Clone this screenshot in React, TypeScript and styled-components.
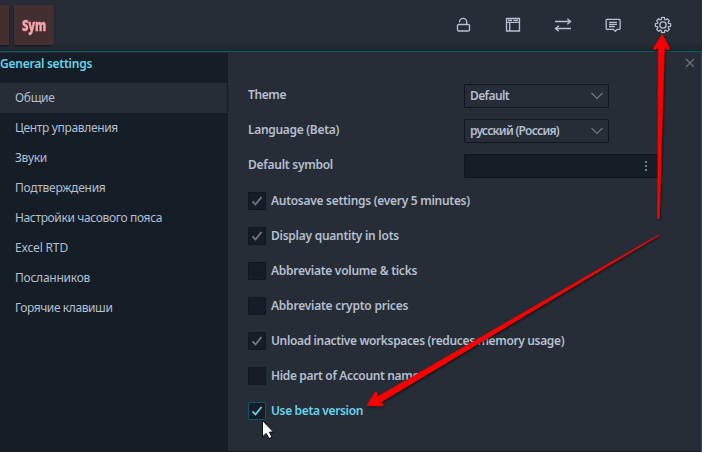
import React from "react";
import styled, { createGlobalStyle } from "styled-components";

const GlobalStyle = createGlobalStyle`
  * { box-sizing: border-box; }
  body {
    margin: 0;
    overflow: hidden;
    background: #262d36;
    color: #b4bfcf;
    font: 400 12px/18px "Noto Sans", "Open Sans", sans-serif;
  }
`;

const Screen = styled.div`
  position: relative;
  display: flex;
  flex-direction: column;
  width: 702px;
  height: 452px;
  overflow: hidden;
  background: #262d36;
`;

const TopBar = styled.header`
  display: flex;
  justify-content: space-between;
  flex: none;
  height: 51px;
  padding: 5px 29px 6px 0;
  background: linear-gradient(#262d36 42px, #20262d 51px);
`;

const Symbols = styled.div`
  display: flex;
  gap: 5px;
`;

const SymbolTile = styled.div<{ $width: number }>`
  display: flex;
  align-items: center;
  justify-content: center;
  width: ${(p) => p.$width}px;
  height: 40px;
  background: #442f30;
  box-shadow: 0 1px 2px rgba(0, 0, 0, 0.5);
`;

const SymbolText = styled.span`
  color: #f5a4a8;
  font: 800 16px/20px "Open Sans", sans-serif;
  letter-spacing: -0.3px;
  -webkit-text-stroke: 0.3px currentColor;
  transform: scaleX(0.7);
`;

const Tools = styled.nav`
  display: flex;
  align-items: center;
  gap: 30px;
`;

const ToolIcon = styled.svg`
  display: block;
  width: 20px;
  height: 20px;
  fill: none;
  stroke: #b6c0d0;
  stroke-width: 1.3;
`;

const Panel = styled.main`
  display: flex;
  flex: 1;
  border: solid #0c5668;
  border-width: 1px 1px 0 0;
  box-shadow: inset 0 -1px 0 #1b1c24;
`;

const Sidebar = styled.aside`
  width: 228px;
  margin: 1px 0;
  background: #151e27;
`;

const Label = styled.span<{ $track: number }>`
  letter-spacing: ${(p) => p.$track}px;
  white-space: nowrap;
`;

const SidebarTitle = styled.h1`
  display: flex;
  align-items: center;
  height: 30px;
  margin: 0;
  padding-bottom: 9px;
  color: #69d3ec;
  font: inherit;
  font-weight: 600;
`;

const MenuItem = styled.div<{ $active?: boolean }>`
  display: flex;
  align-items: center;
  width: 227px;
  height: 30px;
  padding-left: 15px;
  background: ${(p) => (p.$active ? "#262d36" : "transparent")};
`;

const Content = styled.section`
  flex: 1;
  padding: 4px 4px 0 20px;
  font-weight: 600;
`;

const CloseRow = styled.div`
  display: flex;
  justify-content: flex-end;
  height: 28px;
`;

const CloseIcon = styled.svg`
  width: 14px;
  height: 14px;
  stroke: #6c747e;
  stroke-width: 1.1;
`;

const FieldRow = styled.div`
  display: grid;
  grid-template-columns: 216px 1fr;
  align-items: start;
  height: 35px;
  line-height: 22px;
`;

const Select = styled.div`
  display: flex;
  align-items: center;
  justify-content: space-between;
  width: 145px;
  height: 24px;
  padding: 0 5px;
  border: 1px solid #11171e;
  border-radius: 1px;
`;

const Chevron = styled.svg`
  width: 12px;
  height: 8px;
  fill: none;
  stroke: #6c7681;
  stroke-width: 1.2;
`;

const SymbolInput = styled.div`
  display: flex;
  align-items: center;
  justify-content: flex-end;
  width: 195px;
  height: 24px;
  padding-right: 11px;
  border: 1px solid #10171d;
  border-radius: 1px;
  background: #151e27;
`;

const Dots = styled.svg`
  width: 2px;
  height: 10px;
  fill: #747c86;
`;

const CheckRow = styled.div<{ $hover?: boolean }>`
  display: flex;
  align-items: center;
  gap: 5px;
  height: 18px;
  margin-bottom: 17px;
  color: ${(p) => (p.$hover ? "#69d3ec" : "inherit")};
`;

const CheckList = styled.div`
  padding-top: 3px;
`;

const CheckBox = styled.div<{ $hover?: boolean }>`
  display: flex;
  align-items: center;
  justify-content: center;
  width: 18px;
  height: 18px;
  border: 1px solid ${(p) => (p.$hover ? "#0c5668" : "#10171d")};
  border-radius: 1px;
  background: #151e27;
  color: ${(p) => (p.$hover ? "#69d3ec" : "#737c86")};
`;

const CheckMark = styled.svg`
  width: 12px;
  height: 12px;
  fill: none;
  stroke: currentColor;
  stroke-width: 1.8;
`;

const Annotations = styled.svg`
  position: absolute;
  inset: 0;
  width: 702px;
  height: 452px;
  pointer-events: none;
`;

const menu = [
  { text: "Общие", track: -0.32 },
  { text: "Центр управления", track: -0.34 },
  { text: "Звуки", track: -0.3 },
  { text: "Подтверждения", track: -0.24 },
  { text: "Настройки часового пояса", track: -0.36 },
  { text: "Excel RTD", track: -0.16 },
  { text: "Посланников", track: -0.25 },
  { text: "Горячие клавиши", track: -0.41 },
];

const options = [
  { text: "Autosave settings (every 5 minutes)", track: -0.29, checked: true },
  { text: "Display quantity in lots", track: -0.26, checked: true },
  { text: "Abbreviate volume & ticks", track: -0.27, checked: false },
  { text: "Abbreviate crypto prices", track: -0.23, checked: false },
  { text: "Unload inactive workspaces (reduces memory usage)", track: -0.36, checked: true },
  { text: "Hide part of Account name", track: -0.35, checked: false },
  { text: "Use beta version", track: -0.36, checked: true, hover: true },
];

// Eight-toothed outline built around the centre of a 20px box.
const gearPath =
  Array.from({ length: 8 }, (_, i) => {
    const at = (r: number, deg: number) => {
      const a = ((i * 45 + deg) * Math.PI) / 180;
      return `${(10 + r * Math.sin(a)).toFixed(2)} ${(10 - r * Math.cos(a)).toFixed(2)}`;
    };
    return `${i ? "L" : "M"}${at(5.9, -16)}L${at(7.6, -11)}Q${at(7.9, 0)} ${at(7.6, 11)}L${at(5.9, 16)}Q${at(5.5, 22.5)} ${at(5.9, 29)}`;
  }).join("") + "Z";

function DropDown({ text, track }: { text: string; track: number }) {
  return (
    <Select>
      <Label $track={track}>{text}</Label>
      <Chevron viewBox="0 0 12 8"><path d="M.5 1 6 6.5 11.5 1" /></Chevron>
    </Select>
  );
}

export default function App() {
  return (
    <Screen>
      <GlobalStyle />
      <TopBar>
        <Symbols>
          <SymbolTile $width={9} />
          <SymbolTile $width={40}><SymbolText>Sym</SymbolText></SymbolTile>
        </Symbols>
        <Tools>
          <ToolIcon viewBox="0 0 20 20">
            <rect x="4.5" y="9.5" width="12" height="6.5" rx="1" />
            <path d="M6.5 7.2V6.9a3.6 3.6 0 0 1 7.2 0v2.6" />
          </ToolIcon>
          <ToolIcon viewBox="0 0 20 20">
            <path d="M3.5 3.5h13v12.5h-13zM3.5 7.3h13M6.7 7.3V16M5 5.4h4M10.5 5.4h4.5" />
          </ToolIcon>
          <ToolIcon viewBox="0 0 20 20">
            <path d="M2 6.5h16M14.3 3.7l3.4 2.8-3.4 2.8M18 13.5H2.3M5.8 10.7l-3.4 2.8 3.4 2.8" />
          </ToolIcon>
          <ToolIcon viewBox="0 0 20 20">
            <path d="M4 4.4h12.3a.8.8 0 0 1 .8.8v8.4a.8.8 0 0 1-.8.8h-2.2L12.3 16.4 10.4 14.4H4a.8.8 0 0 1-.8-.8V5.2a.8.8 0 0 1 .8-.8zM6 7.3h8M6 9.4h8M6 11.5h6" />
          </ToolIcon>
          <ToolIcon viewBox="0 0 20 20">
            <path d={gearPath} />
            <circle cx="10" cy="10" r="3.1" />
          </ToolIcon>
        </Tools>
      </TopBar>
      <Panel>
        <Sidebar>
          <SidebarTitle><Label $track={-0.25}>General settings</Label></SidebarTitle>
          {menu.map((item, i) => (
            <MenuItem key={item.text} $active={i === 0}>
              <Label $track={item.track}>{item.text}</Label>
            </MenuItem>
          ))}
        </Sidebar>
        <Content>
          <CloseRow>
            <CloseIcon viewBox="0 0 14 14"><path d="m3 3 8 8m0-8-8 8" /></CloseIcon>
          </CloseRow>
          <FieldRow>
            <Label $track={-0.41}>Theme</Label>
            <DropDown text="Default" track={-0.6} />
          </FieldRow>
          <FieldRow>
            <Label $track={-0.31}>Language (Beta)</Label>
            <DropDown text="русский (Россия)" track={-0.74} />
          </FieldRow>
          <FieldRow>
            <Label $track={-0.26}>Default symbol</Label>
            <SymbolInput>
              <Dots viewBox="0 0 2 10"><path d="M0 0h2v2H0zM0 4h2v2H0zM0 8h2v2H0z" /></Dots>
            </SymbolInput>
          </FieldRow>
          <CheckList>
            {options.map((o) => (
              <CheckRow key={o.text} $hover={o.hover}>
                <CheckBox $hover={o.hover}>
                  {o.checked && <CheckMark viewBox="0 0 12 12"><path d="m1.5 6.3 3 3.2L10.5 2" /></CheckMark>}
                </CheckBox>
                <Label $track={o.track}>{o.text}</Label>
              </CheckRow>
            ))}
          </CheckList>
        </Content>
      </Panel>
      <Annotations viewBox="0 0 702 452">
        <defs>
          <filter id="arrow-shadow" x="-10%" y="-10%" width="120%" height="120%">
            <feDropShadow dx="0.8" dy="1.2" stdDeviation="0.8" floodColor="#000" floodOpacity="0.65" />
          </filter>
        </defs>
        <g fill="#fb0200" stroke="#fb0200" strokeLinejoin="round" filter="url(#arrow-shadow)">
          <path strokeWidth="0.6" d="M662 34.5 669.6 48Q669.8 50.2 667.5 49.6L664.3 47.5 659.2 218.5H657.6L658.5 47.5 655.3 49.4Q653 50 653.8 47.8Z" />
          <path strokeWidth="0.6" d="M367 405.5 375 392.2Q377 391 377 393.6L376.8 397.2 658.5 235 658.7 235.5 380.4 402.2 382.8 403.8Q384.2 405.5 382 405.8Z" />
        </g>
        <path fill="#fff" stroke="#090b12" strokeWidth="1" d="M262.5 420.5v16.3l3.7-3.4 2.8 5.2 3-1.4-2.6-5.1h4.1z" />
      </Annotations>
    </Screen>
  );
}
